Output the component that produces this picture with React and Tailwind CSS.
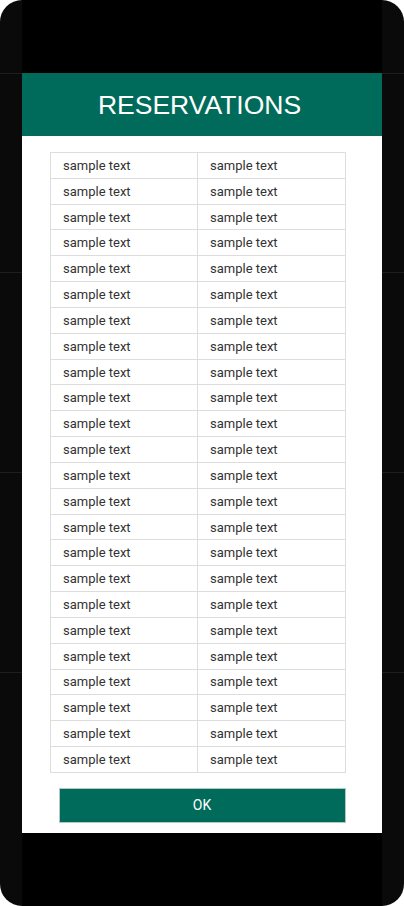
import React from "react";

export default function App() {
  const rows = Array.from({ length: 24 });
  return (
    <div className="w-[404px] h-[906px] bg-white">
      <div className="relative w-[404px] h-[906px] rounded-[22px] overflow-hidden bg-[#0a0a0a] flex justify-center">
        {[73, 272, 472, 672].map((t) => (
          <div key={t} className="absolute left-0 right-0 h-[1px] bg-[#1e1e1e]" style={{ top: t }} />
        ))}
        <div className="relative w-[360px] h-full bg-black flex flex-col pt-[73px]">
          <div className="h-[63px] bg-[#006b5a] flex items-center justify-center">
            <span className="text-white text-[26.5px] leading-none pt-[1px] mr-[5px]" style={{ fontFamily: '"Liberation Sans", Arial, sans-serif' }}>
              RESERVATIONS
            </span>
          </div>
          <div className="bg-white h-[697px] flex flex-col items-center pt-[16px]" style={{ fontFamily: 'Roboto, "Liberation Sans", sans-serif' }}>
            <table className="w-[296px] border-collapse ml-[-8px]">
              <tbody>
                {rows.map((_, i) => (
                  <tr key={i} className="h-[25.83px]">
                    <td className="w-[147px] border border-[#dddddd] pl-[12px] text-[13px] text-[#333333] leading-none p-0">sample text</td>
                    <td className="border border-[#dddddd] pl-[12px] text-[13px] text-[#333333] leading-none p-0">sample text</td>
                  </tr>
                ))}
              </tbody>
            </table>
            <button className="mt-[15px] w-[287px] h-[35px] bg-[#006b5a] border border-[#b3c7c3] text-white text-[14px] flex items-center justify-center">
              OK
            </button>
          </div>
        </div>
      </div>
    </div>
  );
}
